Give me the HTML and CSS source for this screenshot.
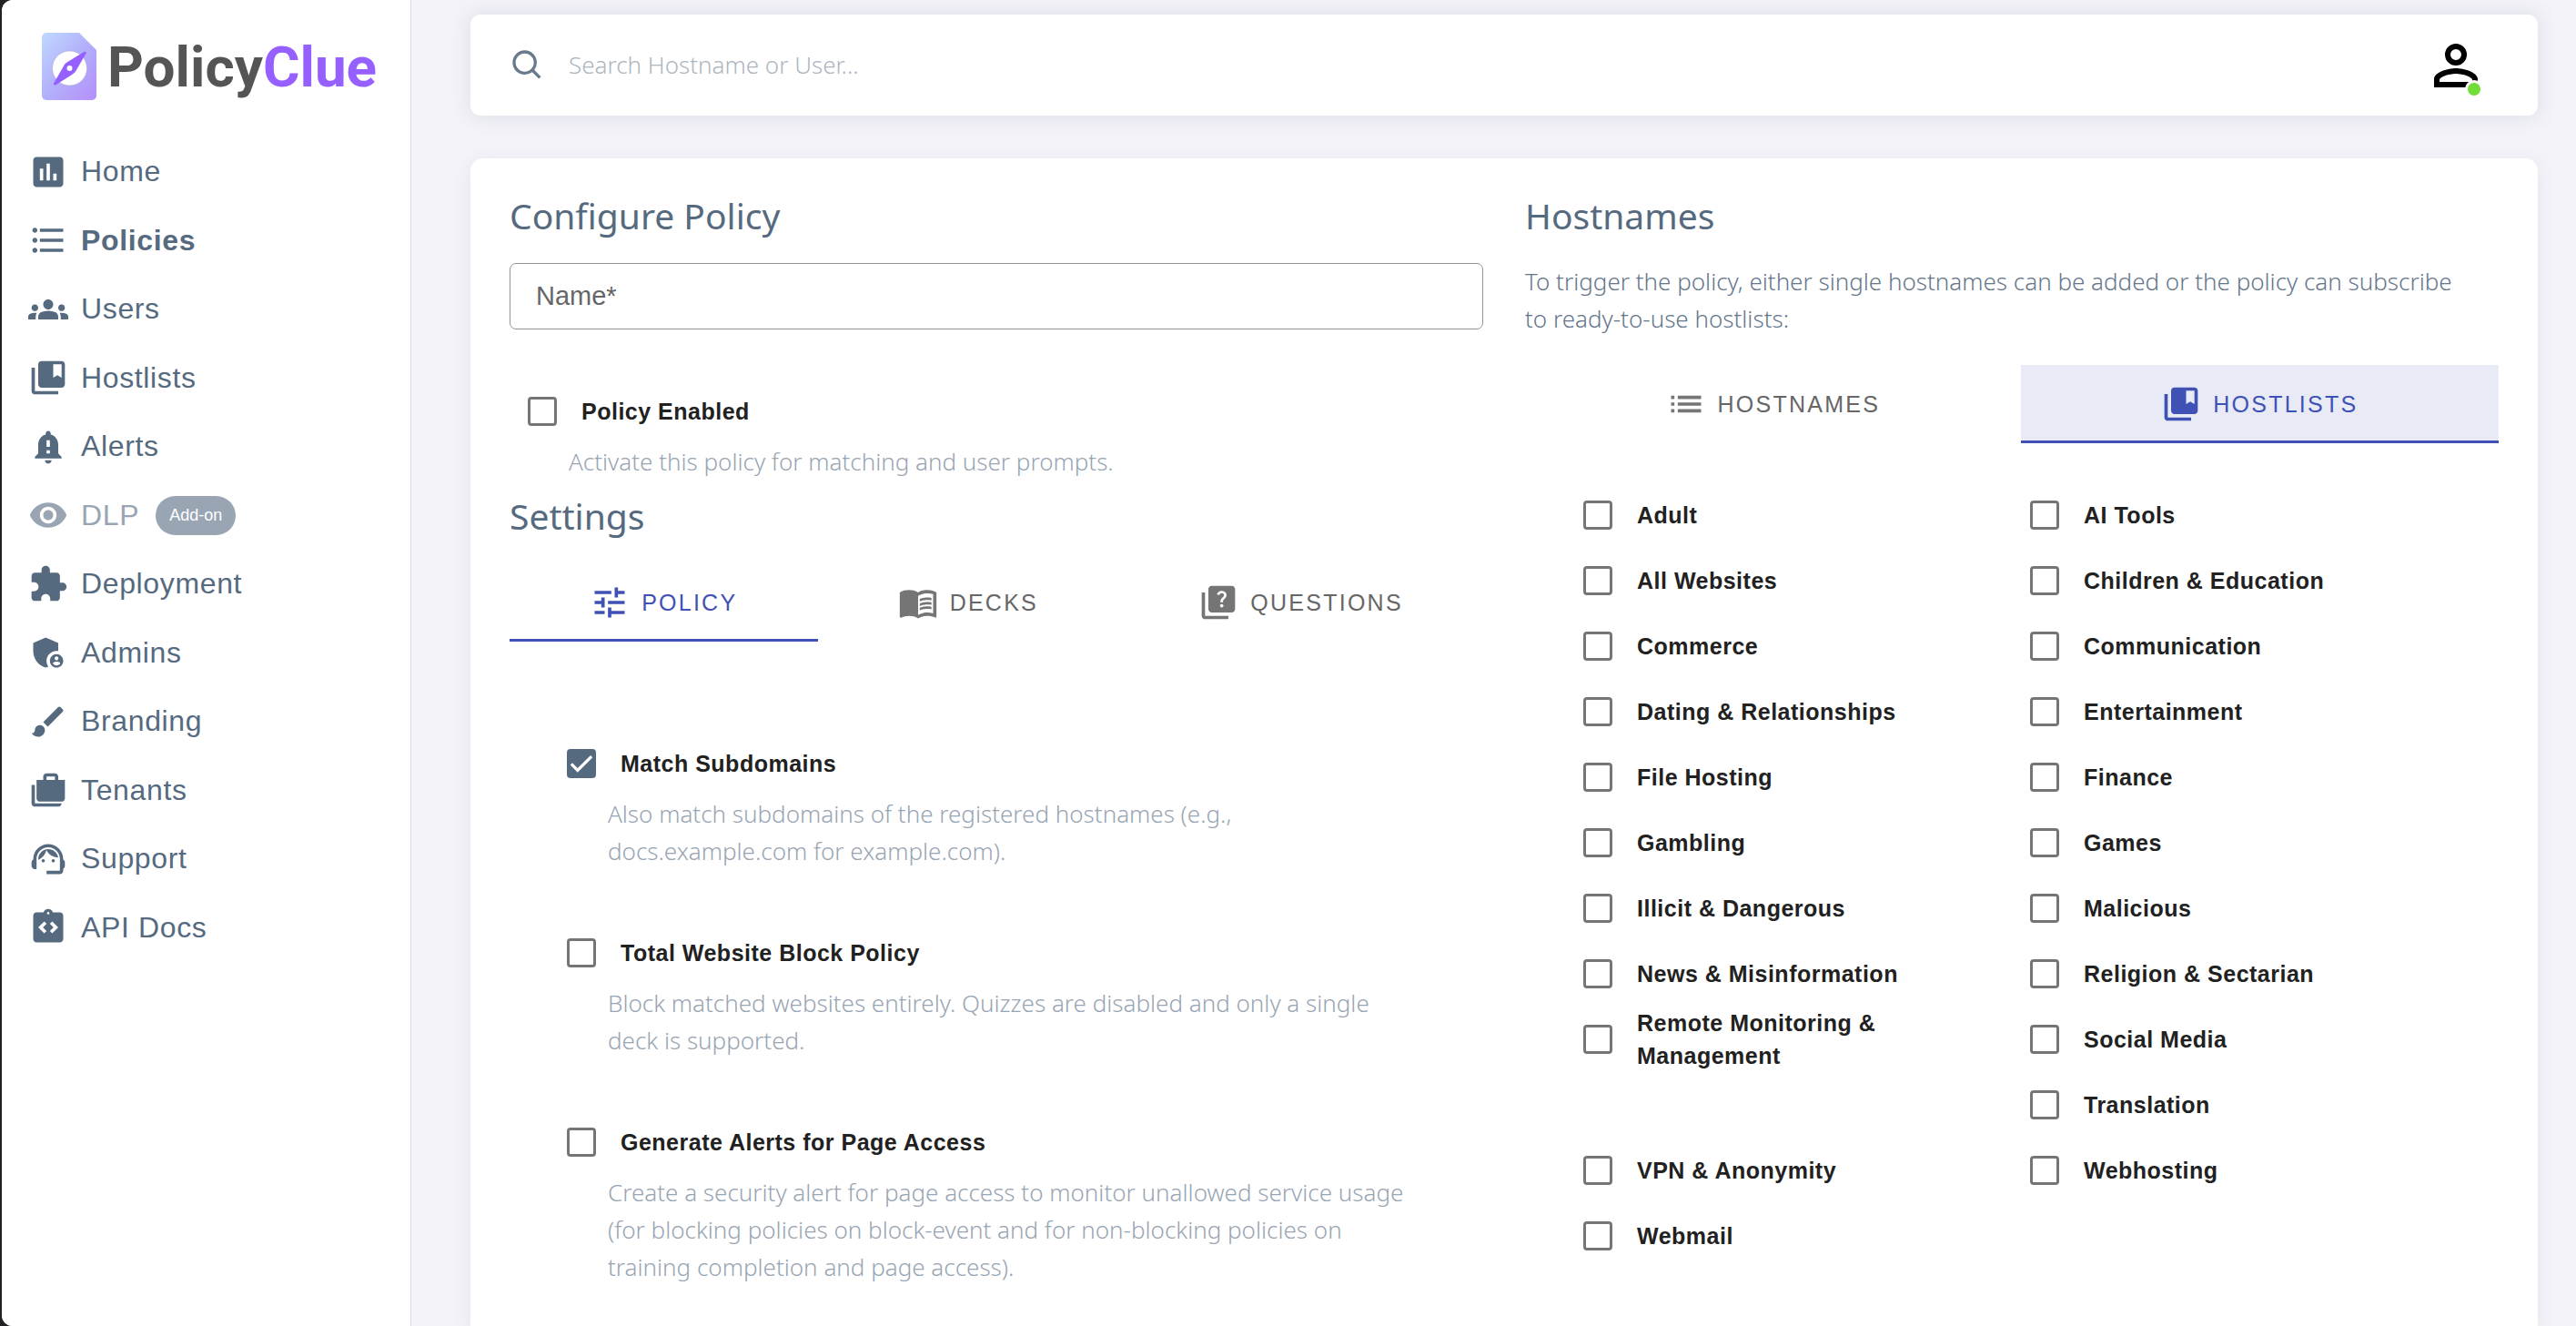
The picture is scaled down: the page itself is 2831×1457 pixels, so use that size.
FILE: index.html
```html
<!DOCTYPE html>
<html lang="en">
<head>
<meta charset="utf-8">
<meta name="viewport" content="width=device-width, initial-scale=1">
<title>PolicyClue – Configure Policy</title>
<link rel="stylesheet" href="styles.css">
</head>
<body>
<svg class="sprite" aria-hidden="true">
  <symbol id="i-bookmarks" viewBox="0 0 24 24"><path d="M4 6H2v14c0 1.100.9 2 2 2h14v-2H4V6z"/><path d="M20 2H8c-1.100 0-2 .9-2 2v12c0 1.100.9 2 2 2h12c1.100 0 2-.9 2-2V4c0-1.100-.9-2-2-2zm0 10l-2.500-1.500L15 12V4h5v8z"/></symbol>
</svg>
<div class="app">
  <aside class="sidebar">
    <a class="brand" href="#">
      <svg class="brand-mark" viewBox="0 0 60 74" aria-hidden="true">
        <defs><linearGradient id="doc" x1="0" y1="0" x2="1" y2="1"><stop offset="0" stop-color="#bfd9ff"/><stop offset=".5" stop-color="#b3b0fb"/><stop offset="1" stop-color="#b48ffb"/></linearGradient></defs>
        <path fill="url(#doc)" d="M5 0h36l19 19v50a5 5 0 0 1-5 5H5a5 5 0 0 1-5-5V5a5 5 0 0 1 5-5z"/>
        <circle cx="30.500" cy="39" r="19" fill="#fff" stroke="#a9a4d0" stroke-width=".5"/>
        <path fill="#9560ff" d="M46.300 21c1.700-1 3 .3 2 2L38.500 40c-1.200 2.200-2.300 3.800-4.300 5.200L15.500 57.200c-1.800 1-3.300-.4-2.200-2.200L23.500 37.500c1.200-2.200 2-3.600 4-4.900z"/>
        <circle cx="30.500" cy="39" r="3" fill="#fff"/>
      </svg>
      <span class="brand-name">Policy<span class="brand-accent">Clue</span></span>
    </a>
    <nav>
      <ul class="nav-list">
        <li><a class="nav-link" href="#"><svg class="icon" viewBox="0 0 24 24"><path d="M19 3H5c-1.100 0-2 .9-2 2v14c0 1.100.9 2 2 2h14c1.100 0 2-.9 2-2V5c0-1.100-.9-2-2-2zM9 17H7v-7h2v7zm4 0h-2V7h2v10zm4 0h-2v-4h2v4z"/></svg>Home</a></li>
        <li><a class="nav-link is-active" href="#" aria-current="page"><svg class="icon" viewBox="0 0 24 24"><path d="M4 10.500c-.83 0-1.500.67-1.500 1.500s.67 1.500 1.500 1.500 1.500-.67 1.500-1.500-.67-1.500-1.500-1.500zm0-6c-.83 0-1.500.67-1.500 1.500S3.170 7.500 4 7.500 5.500 6.830 5.500 6 4.830 4.500 4 4.500zm0 12c-.83 0-1.500.68-1.500 1.500s.68 1.500 1.500 1.500 1.500-.68 1.500-1.500-.67-1.500-1.500-1.500zM7 19h14v-2H7v2zm0-6h14v-2H7v2zm0-8v2h14V5H7z"/></svg>Policies</a></li>
        <li><a class="nav-link" href="#"><svg class="icon" viewBox="0 0 24 24"><path d="M12 12.750c1.630 0 3.070.39 4.240.9 1.080.48 1.760 1.560 1.760 2.730V18H6v-1.610c0-1.180.68-2.260 1.760-2.730 1.170-.52 2.610-.91 4.240-.91zM4 13c1.100 0 2-.9 2-2s-.9-2-2-2-2 .9-2 2 .9 2 2 2zm1.130 1.100c-.37-.06-.74-.1-1.130-.1-.99 0-1.930.21-2.780.58C.48 14.900 0 15.620 0 16.430V18h4.500v-1.610c0-.83.23-1.610.63-2.290zM20 13c1.100 0 2-.9 2-2s-.9-2-2-2-2 .9-2 2 .9 2 2 2zm4 3.430c0-.81-.48-1.530-1.220-1.850-.85-.37-1.790-.58-2.780-.58-.39 0-.76.04-1.130.1.4.68.63 1.460.63 2.290V18H24v-1.570zM12 6c1.660 0 3 1.340 3 3s-1.340 3-3 3-3-1.340-3-3 1.340-3 3-3z"/></svg>Users</a></li>
        <li><a class="nav-link" href="#"><svg class="icon"><use href="#i-bookmarks"/></svg>Hostlists</a></li>
        <li><a class="nav-link" href="#"><svg class="icon" viewBox="0 0 24 24"><path d="M18 16v-5c0-3.070-1.640-5.640-4.500-6.320V4c0-.83-.67-1.500-1.500-1.500s-1.500.67-1.500 1.500v.68C7.630 5.360 6 7.920 6 11v5l-2 2v1h16v-1l-2-2zm-5 0h-2v-2h2v2zm0-4h-2V8h2v4zm-1 10c1.100 0 2-.9 2-2h-4c0 1.100.89 2 2 2z"/></svg>Alerts</a></li>
        <li><a class="nav-link is-muted" href="#"><svg class="icon" viewBox="0 0 24 24"><path d="M12 4.500C7 4.500 2.730 7.610 1 12c1.730 4.390 6 7.500 11 7.500s9.270-3.110 11-7.500c-1.730-4.390-6-7.500-11-7.500zM12 17c-2.760 0-5-2.240-5-5s2.240-5 5-5 5 2.240 5 5-2.240 5-5 5zm0-8c-1.660 0-3 1.340-3 3s1.340 3 3 3 3-1.340 3-3-1.340-3-3-3z"/></svg>DLP<span class="badge">Add-on</span></a></li>
        <li><a class="nav-link" href="#"><svg class="icon" viewBox="0 0 24 24"><path d="M20.500 11H19V7c0-1.100-.9-2-2-2h-4V3.500C13 2.120 11.880 1 10.500 1S8 2.120 8 3.500V5H4c-1.100 0-1.990.9-1.990 2v3.800H3.500c1.490 0 2.700 1.210 2.700 2.700s-1.210 2.700-2.700 2.700H2V20c0 1.100.9 2 2 2h3.800v-1.500c0-1.490 1.210-2.700 2.700-2.700 1.490 0 2.700 1.210 2.700 2.700V22H17c1.100 0 2-.9 2-2v-4h1.500c1.380 0 2.500-1.120 2.500-2.500S21.880 11 20.500 11z"/></svg>Deployment</a></li>
        <li><a class="nav-link" href="#"><svg class="icon" viewBox="0 0 24 24"><path d="M17 11c.34 0 .67.04 1 .09V6.270L10.500 3 3 6.270v4.910c0 4.540 3.200 8.790 7.500 9.820.55-.13 1.080-.32 1.600-.55-.69-.98-1.100-2.170-1.100-3.450 0-3.310 2.690-6 6-6z"/><path d="M17 13c-2.210 0-4 1.790-4 4s1.790 4 4 4 4-1.790 4-4-1.790-4-4-4zm0 1.380c.62 0 1.120.51 1.120 1.120s-.51 1.120-1.120 1.120-1.120-.51-1.120-1.120.5-1.120 1.120-1.120zm0 5.370c-.93 0-1.740-.46-2.240-1.170.05-.72 1.510-1.080 2.240-1.080s2.190.36 2.240 1.080c-.5.71-1.310 1.170-2.240 1.170z"/></svg>Admins</a></li>
        <li><a class="nav-link" href="#"><svg class="icon" viewBox="0 0 24 24"><path d="M7 14c-1.660 0-3 1.340-3 3 0 1.310-1.160 2-2 2 .92 1.220 2.490 2 4 2 2.210 0 4-1.790 4-4 0-1.660-1.340-3-3-3zm13.710-9.370l-1.340-1.340c-.39-.39-1.020-.39-1.410 0L9 12.250 11.750 15l8.960-8.960c.39-.39.39-1.020 0-1.410z"/></svg>Branding</a></li>
        <li><a class="nav-link" href="#"><svg class="icon" viewBox="0 0 24 24"><path d="M22 6h-4V4c0-1.100-.9-2-2-2h-5c-1.100 0-2 .9-2 2v2H5v11c0 1.100.9 2 2 2h13c1.100 0 2-.9 2-2V6zm-6 0h-5V4h5v2zM4 9H2v11c0 1.100.9 2 2 2h14c1.100 0 2-.9 2-2H4V9z"/></svg>Tenants</a></li>
        <li><a class="nav-link" href="#"><svg class="icon" viewBox="0 0 24 24"><path d="M21 12.220C21 6.730 16.740 3 12 3c-4.690 0-9 3.650-9 9.280-.6.34-1 .98-1 1.720v2c0 1.100.9 2 2 2h1v-6.100c0-3.870 3.130-7 7-7s7 3.130 7 7V19h-8v2h8c1.100 0 2-.9 2-2v-1.220c.59-.31 1-.92 1-1.640v-2.300c0-.7-.41-1.310-1-1.620z"/><circle cx="9" cy="13" r="1"/><circle cx="15" cy="13" r="1"/><path d="M18 11.030C17.520 8.180 15.040 6 12.050 6c-3.030 0-6.290 2.510-6.030 6.450 2.470-1.010 4.330-3.210 4.860-5.890 1.310 2.630 4 4.440 7.120 4.470z"/></svg>Support</a></li>
        <li><a class="nav-link" href="#"><svg class="icon" viewBox="0 0 24 24"><path fill-rule="evenodd" d="M19 3h-4.180C14.400 1.840 13.300 1 12 1s-2.400.84-2.820 2H5c-1.100 0-2 .9-2 2v14c0 1.100.9 2 2 2h14c1.100 0 2-.9 2-2V5c0-1.100-.9-2-2-2zM12 2.750a.75.75 0 1 1 0 1.500.75.75 0 0 1 0-1.500zM11 14.170L9.590 15.590 6 12l3.590-3.590L11 9.830 8.830 12 11 14.170zm3.410 1.420L13 14.170 15.170 12 13 9.830l1.410-1.420L18 12l-3.590 3.590z"/></svg>API Docs</a></li>
      </ul>
    </nav>
  </aside>

  <div class="page">
    <header class="topbar">
      <form class="search" role="search">
        <svg class="search-icon" viewBox="0 0 24 24" aria-hidden="true"><path d="M10 18a7.952 7.952 0 0 0 4.897-1.688l4.396 4.396 1.414-1.414-4.396-4.396A7.952 7.952 0 0 0 18 10c0-4.411-3.589-8-8-8s-8 3.589-8 8 3.589 8 8 8zm0-14c3.309 0 6 2.691 6 6s-2.691 6-6 6-6-2.691-6-6 2.691-6 6-6z"/></svg>
        <input class="search-input" type="search" placeholder="Search Hostname or User..." aria-label="Search Hostname or User">
      </form>
      <button class="avatar" type="button" aria-label="Account">
        <svg class="avatar-icon" viewBox="0 0 24 24" aria-hidden="true"><path fill-rule="evenodd" d="M12 4a4 4 0 1 1 0 8 4 4 0 0 1 0-8zm0 2a2 2 0 1 0 0 4 2 2 0 0 0 0-4zM12 13c2.670 0 8 1.340 8 4v3H4v-3c0-2.660 5.330-4 8-4zm0 2c-2.700 0-6 1.260-6 2.200V18h12v-.8c0-.94-3.300-2.200-6-2.200z"/></svg>
        <span class="status-dot"></span>
      </button>
    </header>

    <main class="card">
      <section class="column">
        <h2 class="heading">Configure Policy</h2>
        <input class="text-field" type="text" placeholder="Name*" aria-label="Name" required>
        <div class="option option-first">
          <label class="check"><input type="checkbox"><span>Policy Enabled</span></label>
          <p class="hint">Activate this policy for matching and user prompts.</p>
        </div>
        <h2 class="heading heading-next">Settings</h2>
        <div class="tabs" role="tablist">
          <button class="tab is-selected" type="button" role="tab" aria-selected="true"><svg class="icon" viewBox="0 0 24 24"><path d="M3 17v2h6v-2H3zM3 5v2h10V5H3zm10 16v-2h8v-2h-8v-2h-2v6h2zM7 9v2H3v2h4v2h2V9H7zm14 4v-2H11v2h10zm-6-4h2V7h4V5h-4V3h-2v6z"/></svg>POLICY</button>
          <button class="tab" type="button" role="tab" aria-selected="false"><svg class="icon" viewBox="0 0 24 24"><path d="M21 5c-1.110-.35-2.330-.5-3.500-.5-1.950 0-4.050.4-5.500 1.500-1.450-1.100-3.550-1.500-5.500-1.500S2.450 4.900 1 6v14.650c0 .25.25.5.5.5.1 0 .15-.05.25-.05C3.100 20.450 5.050 20 6.500 20c1.950 0 4.050.4 5.500 1.500 1.350-.85 3.800-1.500 5.500-1.500 1.650 0 3.350.3 4.750 1.050.1.05.15.05.25.05.25 0 .5-.25.5-.5V6c-.6-.45-1.250-.75-2-1zm0 13.500c-1.100-.35-2.300-.5-3.500-.5-1.700 0-4.150.65-5.500 1.500V8c1.350-.85 3.800-1.500 5.500-1.500 1.200 0 2.400.15 3.500.5v11.500z"/><path d="M17.500 10.500c.88 0 1.730.09 2.500.26V9.240c-.79-.15-1.640-.24-2.500-.24-1.700 0-3.240.29-4.500.83v1.660c1.130-.64 2.700-.99 4.500-.99zM13 12.490v1.660c1.130-.64 2.700-.99 4.500-.99.88 0 1.730.09 2.500.26V11.900c-.79-.15-1.640-.24-2.500-.24-1.700 0-3.240.3-4.500.83zM17.500 14.330c-1.700 0-3.240.29-4.500.83v1.660c1.130-.64 2.700-.99 4.500-.99.88 0 1.730.09 2.500.26v-1.520c-.79-.16-1.640-.24-2.500-.24z"/></svg>DECKS</button>
          <button class="tab" type="button" role="tab" aria-selected="false"><svg class="icon" viewBox="0 0 24 24"><path d="M4 6H2v14c0 1.100.9 2 2 2h14v-2H4V6zm16-4H8c-1.100 0-2 .9-2 2v12c0 1.100.9 2 2 2h12c1.100 0 2-.9 2-2V4c0-1.100-.9-2-2-2zm-5.990 13c-.59 0-1.050-.47-1.050-1.050 0-.59.47-1.040 1.050-1.040.59 0 1.040.45 1.040 1.040-.01.58-.45 1.050-1.040 1.050zm2.500-6.170c-.63.93-1.230 1.210-1.560 1.810-.13.24-.18.4-.18 1.180h-1.520c0-.41-.06-1.080.26-1.650.41-.73 1.180-1.160 1.630-1.800.48-.68.21-1.940-1.140-1.940-.88 0-1.320.67-1.500 1.230l-1.370-.57C11.510 5.960 12.520 5 13.990 5c1.230 0 2.080.56 2.510 1.260.37.61.58 1.730.01 2.570z"/></svg>QUESTIONS</button>
        </div>
        <div class="options">
          <div class="option">
            <label class="check"><input type="checkbox" checked><span>Match Subdomains</span></label>
            <p class="hint">Also match subdomains of the registered hostnames (e.g., docs.example.com for example.com).</p>
          </div>
          <div class="option">
            <label class="check"><input type="checkbox"><span>Total Website Block Policy</span></label>
            <p class="hint">Block matched websites entirely. Quizzes are disabled and only a single deck is supported.</p>
          </div>
          <div class="option">
            <label class="check"><input type="checkbox"><span>Generate Alerts for Page Access</span></label>
            <p class="hint">Create a security alert for page access to monitor unallowed service usage (for blocking policies on block-event and for non-blocking policies on training completion and page access).</p>
          </div>
        </div>
      </section>

      <section class="column">
        <h2 class="heading">Hostnames</h2>
        <p class="intro">To trigger the policy, either single hostnames can be added or the policy can subscribe to ready-to-use hostlists:</p>
        <div class="tabs" role="tablist">
          <button class="tab" type="button" role="tab" aria-selected="false"><svg class="icon" viewBox="0 0 24 24"><path d="M3 13h2v-2H3v2zm0 4h2v-2H3v2zm0-8h2V7H3v2zm4 4h14v-2H7v2zm0 4h14v-2H7v2zM7 7v2h14V7H7z"/></svg>HOSTNAMES</button>
          <button class="tab is-selected is-focused" type="button" role="tab" aria-selected="true"><svg class="icon"><use href="#i-bookmarks"/></svg>HOSTLISTS</button>
        </div>
        <div class="hostlists">
          <label class="check"><input type="checkbox"><span>Adult</span></label>
          <label class="check"><input type="checkbox"><span>AI Tools</span></label>
          <label class="check"><input type="checkbox"><span>All Websites</span></label>
          <label class="check"><input type="checkbox"><span>Children &amp; Education</span></label>
          <label class="check"><input type="checkbox"><span>Commerce</span></label>
          <label class="check"><input type="checkbox"><span>Communication</span></label>
          <label class="check"><input type="checkbox"><span>Dating &amp; Relationships</span></label>
          <label class="check"><input type="checkbox"><span>Entertainment</span></label>
          <label class="check"><input type="checkbox"><span>File Hosting</span></label>
          <label class="check"><input type="checkbox"><span>Finance</span></label>
          <label class="check"><input type="checkbox"><span>Gambling</span></label>
          <label class="check"><input type="checkbox"><span>Games</span></label>
          <label class="check"><input type="checkbox"><span>Illicit &amp; Dangerous</span></label>
          <label class="check"><input type="checkbox"><span>Malicious</span></label>
          <label class="check"><input type="checkbox"><span>News &amp; Misinformation</span></label>
          <label class="check"><input type="checkbox"><span>Religion &amp; Sectarian</span></label>
          <label class="check check-tall"><input type="checkbox"><span>Remote Monitoring &amp; Management</span></label>
          <label class="check"><input type="checkbox"><span>Social Media</span></label>
          <label class="check"><input type="checkbox"><span>Translation</span></label>
          <label class="check"><input type="checkbox"><span>VPN &amp; Anonymity</span></label>
          <label class="check"><input type="checkbox"><span>Webhosting</span></label>
          <label class="check"><input type="checkbox"><span>Webmail</span></label>
        </div>
      </section>
    </main>
  </div>
</div>
</body>
</html>
```
FILE: styles.css
```css
:root {
  --slate: #566a7f;
  --indigo: #3f51b5;
  --grey: #757575;
  --ui: "Liberation Sans", Arial, sans-serif;
  --text: "Noto Sans", "Open Sans", sans-serif;
}

* { box-sizing: border-box; }

body {
  margin: 0;
  background: #222224;
  font-family: var(--ui);
}

h2, p, ul { margin: 0; padding: 0; }

button, input { font: inherit; }

.sprite { display: none; }

.app {
  display: flex;
  min-height: 100vh;
  margin-left: 2px;
  border-radius: 12px 0 0 12px;
  overflow: hidden;
  background: #f4f3f9;
}

/* Sidebar */
.sidebar {
  flex: 0 0 450px;
  border-right: 1px solid #d9dae0;
  background: #fff;
}

.brand {
  display: flex;
  align-items: flex-start;
  gap: 12px;
  padding: 36px 0 0 44px;
  text-decoration: none;
}

.brand-mark { width: 60px; height: 74px; }

.brand-name {
  font: 700 62px/76px Roboto, sans-serif;
  color: #555;
}

.brand-accent { color: #9560ff; }

.nav-list {
  margin-top: 39px;
  list-style: none;
}

.nav-link {
  display: flex;
  align-items: center;
  gap: 14px;
  padding-left: 29px;
  color: var(--slate);
  font-size: 32px;
  line-height: 2.36;
  letter-spacing: 0.02em;
  text-decoration: none;
}

.nav-link.is-active { font-weight: 700; }

.nav-link.is-muted { opacity: 0.6; }

.icon {
  flex: none;
  width: 44px;
  height: 44px;
  fill: currentColor;
}

.badge {
  padding: 0 15px;
  border-radius: 22px;
  background: var(--slate);
  color: #fff;
  font-size: 18px;
  line-height: 43px;
  letter-spacing: normal;
  margin-left: 4px;
}

/* Page */
.page {
  display: flex;
  flex: 1;
  flex-direction: column;
  gap: 47px;
  min-width: 0;
  padding: 16px 42px 0 65px;
}

.topbar {
  display: flex;
  align-items: center;
  justify-content: space-between;
  height: 111px;
  padding: 0 54px 0 43px;
  border-radius: 11px;
  background: #fff;
  box-shadow: 0 0 20px 4px rgba(67, 89, 113, 0.1);
}

.search { display: flex; align-items: center; }

.search-icon { width: 40px; height: 40px; fill: #697a8d; }

.search-input {
  width: 397px;
  padding: 8px 25px;
  border: 0;
  background: none;
  font: 300 26px/41px var(--text);
  color: var(--slate);
}

.search-input::placeholder { color: #acb6c0; opacity: 1; }

.avatar {
  position: relative;
  width: 72px;
  height: 72px;
  padding: 0;
  border: 0;
  background: none;
}

.avatar-icon { display: block; width: 72px; height: 72px; }

.status-dot {
  position: absolute;
  right: 6px;
  bottom: 0;
  width: 20px;
  height: 20px;
  border: 3px solid #fff;
  border-radius: 50%;
  background: #71dd37;
}

.card {
  display: grid;
  flex: 1;
  grid-template-columns: 1fr 1fr;
  gap: 46px;
  padding: 43px 43px 24px;
  border-radius: 14px 14px 0 0;
  background: #fff;
  box-shadow: 0 4px 20px rgba(67, 89, 113, 0.1);
}

.heading {
  margin-bottom: 32px;
  color: var(--slate);
  font: 400 39px/40px var(--text);
}

.heading-next { margin-top: 19px; }

.text-field {
  display: block;
  width: 100%;
  height: 73px;
  padding: 0 28px;
  border: 1px solid #949494;
  border-radius: 7px;
  background: none;
  font-size: 29px;
}

.text-field::placeholder { color: #666; opacity: 1; }

/* Checkboxes */
.check {
  display: flex;
  align-items: center;
  gap: 27px;
  padding-left: 20px;
  color: #212121;
  font-size: 25px;
  font-weight: 700;
  line-height: 36px;
  letter-spacing: 0.02em;
}

.check input {
  flex: none;
  width: 32px;
  height: 32px;
  margin: 0;
  border: 3px solid var(--grey);
  border-radius: 4px;
  appearance: none;
}

.check input:checked {
  border-color: var(--slate);
  background: var(--slate) url("data:image/svg+xml,%3Csvg xmlns='http://www.w3.org/2000/svg' viewBox='0 0 24 24'%3E%3Cpath fill='none' stroke='%23fff' stroke-width='3' d='M1.700 12.400l6.400 6.500L22.300 4.700'/%3E%3C/svg%3E") center / 26px 26px no-repeat;
}

.option .check { height: 70px; }

.option-first { margin-top: 55px; }

.hint {
  padding-left: 65px;
  color: #98a5b3;
  font: 300 26px/41px var(--text);
}

.options {
  display: grid;
  gap: 56px;
  padding: 99px 70px 0 43px;
}

/* Tabs */
.tabs { display: flex; }

.tab {
  display: flex;
  flex: 1 1 auto;
  align-items: center;
  justify-content: center;
  gap: 13px;
  height: 86px;
  padding: 0;
  border: 0;
  background: none;
  color: #666;
  font-size: 25px;
  letter-spacing: 0.09em;
}

.tab .icon { color: var(--grey); }

.tab.is-selected,
.tab.is-selected .icon { color: var(--indigo); }

.tab.is-selected { box-shadow: inset 0 -3px var(--indigo); }

.tab.is-focused { background: #e8eaf6; }

.intro {
  margin-bottom: 30px;
  padding-right: 30px;
  color: #65778c;
  font: 300 26px/41px var(--text);
}

.hostlists {
  display: grid;
  grid-template-columns: 1fr 1fr;
  grid-auto-rows: 72px;
  padding: 43px 44px 0;
}

.check-tall {
  grid-row: span 2;
  align-self: start;
}
```
